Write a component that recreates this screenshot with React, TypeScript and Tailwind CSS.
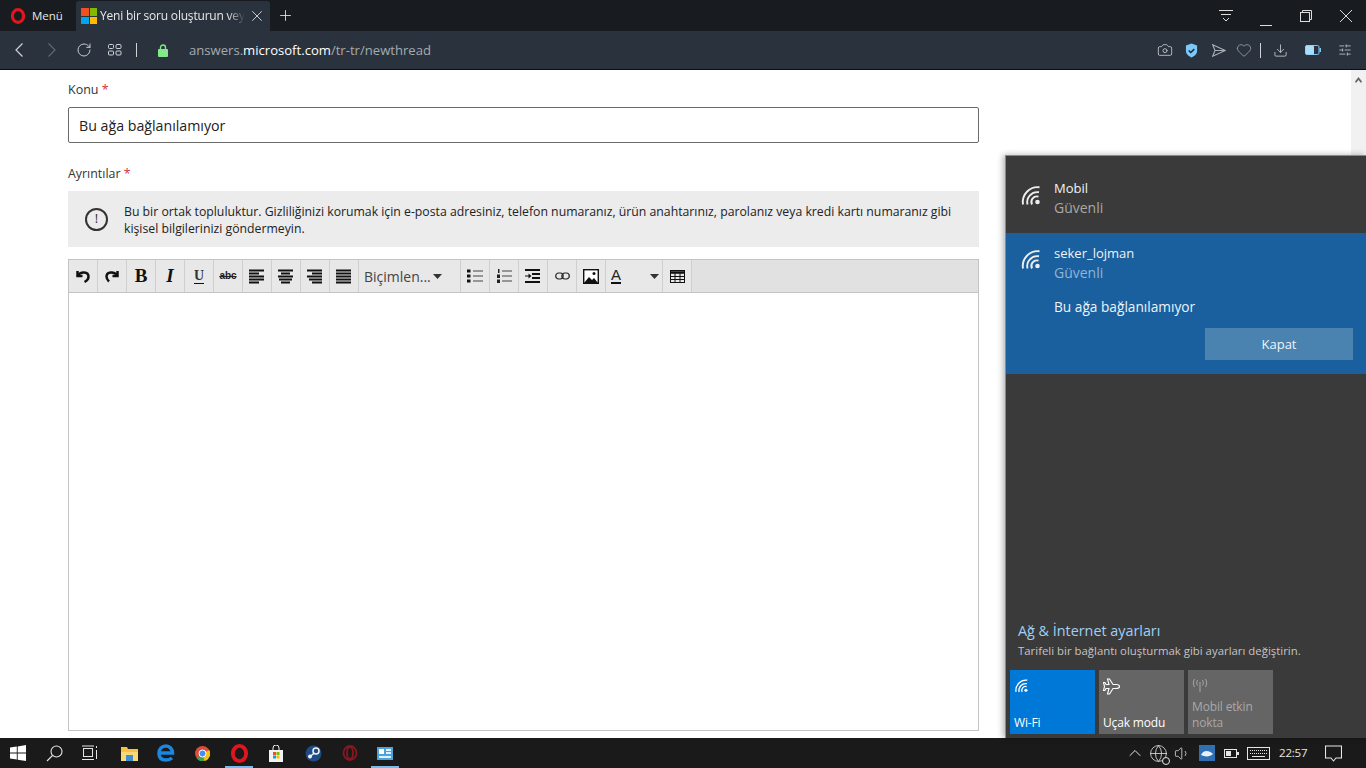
import { ChevronUp, RotateCw, Camera, Heart, Download, X, Plus, Volume1, Globe, SlidersHorizontal } from 'lucide-react';
import type { ReactNode } from 'react';

const FONT = "font-['Open_Sans',sans-serif]";

function WifiIcon({ size = 22, className = '' }: { size?: number; className?: string }) {
  return (
    <svg width={size} height={size} viewBox="0 0 22 22" fill="none" stroke="currentColor" strokeWidth="1.9" className={className}>
      <path d="M3 20.500A15 15 0 0 1 19.500 3.200" />
      <path d="M7.500 20.500A10 10 0 0 1 19 8.300" />
      <path d="M12 20.500A5.500 5.500 0 0 1 18.500 12.700" />
      <circle cx="17.500" cy="18" r="2.300" fill="currentColor" stroke="none" />
    </svg>
  );
}

function OperaLogo({ size = 16 }: { size?: number }) {
  return (
    <svg width={size} height={size} viewBox="0 0 16 16">
      <ellipse cx="8" cy="8" rx="5.600" ry="6.400" fill="none" stroke="#e0161f" strokeWidth="3.200" />
    </svg>
  );
}

function MsLogo() {
  return (
    <span className="grid h-4 w-4 grid-cols-2 gap-px">
      <span className="bg-[#f25022]" />
      <span className="bg-[#7fba00]" />
      <span className="bg-[#00a4ef]" />
      <span className="bg-[#ffb900]" />
    </span>
  );
}

function Lines({ rows }: { rows: string[] }) {
  return (
    <svg width="16" height="15" viewBox="0 0 16 15" fill="#111">
      {rows.map((d, i) => <rect key={i} x={d.split(' ')[0]} y={i * 3 + 0.5} width={d.split(' ')[1]} height="2" />)}
    </svg>
  );
}

const TOOLBAR_LEFT: ReactNode[] = [
  <svg width="16" height="16" viewBox="0 0 16 16" fill="none" stroke="#111" strokeWidth="2.500"><path d="M2.500 3v5h5" /><path d="M3 7.500C5.500 3 13.500 3.500 13.500 8.500c0 3-2 4.500-4 5.500" /></svg>,
  <svg width="16" height="16" viewBox="0 0 16 16" fill="none" stroke="#111" strokeWidth="2.500"><path d="M13.500 3v5h-5" /><path d="M13 7.500C10.500 3 2.500 3.500 2.500 8.500c0 2.500 1 3.500 2.500 5" /></svg>,
  <span className="font-['Liberation_Serif',serif] text-[19px] font-bold text-[#111]">B</span>,
  <span className="font-['Liberation_Serif',serif] text-[19px] font-bold italic text-[#111]">I</span>,
  <span className="border-b border-[#111] font-['Liberation_Serif',serif] text-[14px] leading-[14px] font-bold text-[#333]">U</span>,
  <span className="font-['Liberation_Sans',sans-serif] text-[10px] leading-3 font-bold text-[#222] line-through">abc</span>,
  <Lines rows={['0 15', '0 10', '0 15', '0 15', '0 10']} />,
  <Lines rows={['0 15', '3 9', '0 15', '1 13', '3 9']} />,
  <Lines rows={['0 15', '5 10', '0 15', '2 13', '5 10']} />,
  <Lines rows={['0 15', '0 15', '0 15', '0 15', '0 15']} />,
];

const TOOLBAR_RIGHT: ReactNode[] = [
  <svg width="16" height="14" viewBox="0 0 16 14" fill="#111"><rect x="0" y="0.500" width="3.500" height="3" /><rect x="0" y="5.500" width="3.500" height="3" /><rect x="0" y="10.500" width="3.500" height="3" /><rect x="6" y="1.500" width="10" height="1" fill="#444" /><rect x="6" y="6.500" width="10" height="1" fill="#444" /><rect x="6" y="11.500" width="10" height="1" fill="#444" /></svg>,
  <svg width="16" height="15" viewBox="0 0 16 15" fill="#222"><rect x="2" y="0" width="1.500" height="4" /><rect x="1" y="5.500" width="3" height="3.500" /><rect x="1" y="10.500" width="3" height="3.500" /><rect x="6" y="1.500" width="10" height="1" fill="#444" /><rect x="6" y="6.500" width="10" height="1" fill="#444" /><rect x="6" y="11.500" width="10" height="1" fill="#444" /></svg>,
  <svg width="16" height="15" viewBox="0 0 16 15" fill="#111"><rect x="0" y="0" width="15" height="2" /><rect x="7" y="4" width="8" height="2" /><rect x="7" y="8" width="8" height="2" /><rect x="0" y="12" width="15" height="2" /><path d="M0 6.500h3.500V4.500L6.500 7 3.500 9.500V7.500H0z" /></svg>,
  <svg width="15" height="8" viewBox="0 0 15 8" fill="none" stroke="#222" strokeWidth="1.200"><rect x="0.700" y="1" width="7.500" height="6" rx="3" /><rect x="6.800" y="1" width="7.500" height="6" rx="3" /></svg>,
  <svg width="16" height="15" viewBox="0 0 16 15"><rect x="0.700" y="0.700" width="14.600" height="13.600" fill="#fff" stroke="#111" strokeWidth="1.400" /><path d="M1 14l5-6 3 3 2-2 4 5z" fill="#111" /><circle cx="11" cy="4.500" r="1.500" fill="#111" /></svg>,
];

function ToolButton({ children }: { children: ReactNode }) {
  return <span className="flex h-full w-[29px] items-center justify-center border-r border-[#cfcfcf] bg-[#e8e8e8]">{children}</span>;
}

function Tile({ label, bg, text, icon }: { label: string; bg: string; text: string; icon: ReactNode }) {
  return (
    <div className={`flex h-[64px] w-[85px] flex-col justify-between px-1 pb-[3px] pt-2 text-[12px] leading-4 tracking-[-0.15px] ${bg} ${text}`}>
      <span>{icon}</span>
      <span className="whitespace-pre-line">{label}</span>
    </div>
  );
}

export default function App() {
  return (
    <div className={`relative flex h-[768px] w-[1366px] flex-col overflow-hidden bg-white ${FONT}`}>
      {/* Tab strip */}
      <div className="flex h-[31px] shrink-0 items-end bg-[#181b1f] text-[#e8e8e8]">
        <div className="flex h-[31px] w-[76px] items-center gap-1.5 pl-[10px] text-[11.500px]">
          <OperaLogo />
          <span>Menü</span>
        </div>
        <div className="flex h-[30px] w-[194px] items-center rounded-t-[3px] bg-[#2a333d] pl-[5px] text-[12px]">
          <MsLogo />
          <span className="ml-[3px] w-[145px] overflow-hidden whitespace-nowrap tracking-[-0.2px] [mask-image:linear-gradient(to_right,black_88%,transparent)]">Yeni bir soru oluşturun veya</span>
          <X size={18} strokeWidth={1.1} className="ml-[3px]" />
        </div>
        <Plus size={17} strokeWidth={1.2} className="mb-[7px] ml-[7px]" />
        <div className="ml-auto flex h-[31px] items-center pr-[14px]">
          <svg width="14" height="12" viewBox="0 0 14 12" fill="none" stroke="#ddd" className="mr-[27px]"><path d="M0 .5h14M2 4.500h10M4 8l3 3 3-3" /></svg>
          <svg width="12" height="12" viewBox="0 0 12 12" fill="none" stroke="#ddd" className="mr-[28px] mt-[8px]"><path d="M0 11.500h12" /></svg>
          <svg width="12" height="12" viewBox="0 0 12 12" fill="none" stroke="#ddd" className="mr-[28px]"><rect x="0.500" y="2.500" width="9" height="9" /><path d="M2.500 2.500V.5h9v9h-2" /></svg>
          <svg width="12" height="12" viewBox="0 0 12 12" fill="none" stroke="#ddd"><path d="M0 0l12 12M12 0L0 12" /></svg>
        </div>
      </div>

      {/* Address bar */}
      <div className="flex h-[39px] shrink-0 items-center border-b border-[#0c0e10] bg-[#2a333d] text-[#cfd3d6]">
        <svg width="8" height="14" viewBox="0 0 8 14" fill="none" stroke="#cfd3d6" strokeWidth="1.200" className="ml-[15px]"><path d="M7.500.5 1 7l6.500 6.500" /></svg>
        <svg width="8" height="14" viewBox="0 0 8 14" fill="none" stroke="#5f6871" strokeWidth="1.200" className="ml-[25px]"><path d="M.5.5 7 7 .5 13.500" /></svg>
        <RotateCw size={16} strokeWidth={1.4} className="ml-[20px]" />
        <svg width="14" height="12" viewBox="0 0 14 12" fill="none" stroke="#cfd3d6" className="ml-[16px]"><rect x="0.500" y="0.500" width="5" height="4" rx="1" /><rect x="8" y="0.500" width="5" height="4" rx="1" /><rect x="0.500" y="7" width="5" height="4" rx="1" /><rect x="8" y="7" width="5" height="4" rx="1" /></svg>
        <span className="ml-[14px] h-[14px] w-px bg-[#cfd3d6]" />
        <svg width="10" height="13" viewBox="0 0 10 13" className="ml-[21px]"><path d="M2.500 6V3.500a2.500 2.500 0 0 1 5 0V6" fill="none" stroke="#82e88a" strokeWidth="1.400" /><rect x="0" y="5" width="10" height="8" rx="1" fill="#82e88a" /></svg>
        <span className="ml-[21px] pt-[1px] text-[13.100px] text-[#a3abb2]">
          answers.<span className="text-white">microsoft.com</span>/tr-tr/newthread
        </span>
        <div className="ml-auto flex items-center pr-[14px]">
          <Camera size={16} strokeWidth={1.2} />
          <svg width="13" height="15" viewBox="0 0 14 16" className="ml-[12px]"><path d="M7 .5 13 2.500v6c0 3.500-3 5.500-6 7-3-1.500-6-3.500-6-7v-6z" fill="#7cc8f8" /><path d="M4 8l2.200 2.200L10 6.500" fill="none" stroke="#1b2a38" strokeWidth="1.600" /></svg>
          <svg width="14" height="13" viewBox="0 0 14 13" fill="none" stroke="#a9afb4" strokeWidth="1.100" className="ml-[14px]"><path d="M.7.8 13.300 6.500.7 12.200 3 6.500zM3 6.500h10.300" /></svg>
          <Heart size={16} strokeWidth={1.1} className="ml-[10px] text-[#a9afb4]" />
          <span className="ml-[8px] h-[15px] w-px bg-[#cfd3d6]" />
          <Download size={15} strokeWidth={1.3} className="ml-[12px]" />
          <svg width="16" height="10" viewBox="0 0 16 10" className="ml-[17px]"><rect x="0.500" y="0.500" width="13.500" height="9" rx="1.500" fill="none" stroke="#7cc8f8" /><rect x="0.500" y="0.500" width="8.500" height="9" rx="1" fill="#a8dcfb" /><rect x="14.500" y="3" width="1.500" height="4" fill="#7cc8f8" /></svg>
          <SlidersHorizontal size={14} strokeWidth={1.3} className="ml-[17px]" />
        </div>
      </div>

      {/* Page */}
      <div className="flex min-h-0 flex-1">
        <main className="flex-1 pl-[68px] pt-[11px]">
          <div className="w-[911px]">
            <label className="block text-[12.500px] leading-[18px] text-[#333]">Konu <span className="text-[#d13438]">*</span></label>
            <div className="mt-[8px] flex h-[36px] items-center rounded-[2px] border border-[#6b6b6b] pl-[10px] pt-[2px] text-[14.200px] text-[#222]">Bu ağa bağlanılamıyor</div>
            <label className="mt-[22px] block text-[12.400px] leading-[18px] text-[#333]">Ayrıntılar <span className="text-[#d13438]">*</span></label>
            <div className="mt-[8px] flex h-[56px] items-center bg-[#ececec] pl-[17px] pr-[20px]">
              <span className="flex h-[23px] w-[23px] shrink-0 items-center justify-center rounded-full border-2 border-[#333] text-[13px] text-[#333]">!</span>
              <p className="ml-[16px] pt-[2px] text-[12.250px] leading-[17px] text-[#222]">Bu bir ortak topluluktur. Gizliliğinizi korumak için e-posta adresiniz, telefon numaranız, ürün anahtarınız, parolanız veya kredi kartı numaranız gibi kişisel bilgilerinizi göndermeyin.</p>
            </div>
            <div className="mt-[12px] flex h-[472px] flex-col border border-[#c4c4c4]">
              <div className="flex h-[33px] shrink-0 border-b border-[#c4c4c4] bg-[#e1e1e1]">
                {TOOLBAR_LEFT.map((icon, i) => <ToolButton key={i}>{icon}</ToolButton>)}
                <span className="flex h-full w-[102px] items-center justify-between border-r border-[#cfcfcf] bg-[#e8e8e8] pl-[5px] pr-[18px] text-[14px] text-[#444]">
                  Biçimlen...
                  <svg width="9" height="5" viewBox="0 0 9 5" fill="#333"><path d="M0 0h9L4.500 5z" /></svg>
                </span>
                {TOOLBAR_RIGHT.map((icon, i) => <ToolButton key={i}>{icon}</ToolButton>)}
                <span className="flex h-full w-[57px] items-center justify-between border-r border-[#cfcfcf] bg-[#e8e8e8] pl-[5px] pr-[3px]">
                  <span className="border-b-2 border-[#111] font-['Liberation_Sans',sans-serif] text-[15px] leading-[14px] text-[#222]">A</span>
                  <svg width="9" height="5" viewBox="0 0 9 5" fill="#333"><path d="M0 0h9L4.500 5z" /></svg>
                </span>
                <ToolButton>
                  <svg width="15" height="13" viewBox="0 0 15 13" fill="none" stroke="#111"><rect x="0.500" y="0.500" width="14" height="12" /><path d="M0 2.500h15" strokeWidth="2.500" /><path d="M0 6.500h15M0 9.500h15M5 3v10M10 3v10" /></svg>
                </ToolButton>
              </div>
            </div>
          </div>
        </main>
        <div className="flex w-[15px] shrink-0 justify-center bg-[#f1f1f1] pt-[7px]">
          <svg width="7" height="6" viewBox="0 0 7 6" fill="#666"><path d="M3.500 0 7 4.500 6 6 3.500 3 1 6 0 4.500z" /></svg>
        </div>
      </div>

      {/* Network flyout */}
      <aside className="absolute bottom-[30px] left-[1005px] right-0 top-[155px] flex flex-col border-l border-t border-[#8a8a8a] bg-[#3a3a3a] text-white shadow-[-2px_0_6px_rgba(0,0,0,0.3)]">
        <div className="flex h-[77px] shrink-0 pl-[14px] pt-[23px]">
          <WifiIcon className="mt-[5px] text-[#eee]" />
          <div className="ml-[12px] text-[13px] leading-[19px]">
            <div className="text-[#f2f2f2]">Mobil</div>
            <div className="text-[14px] text-[#a8a8a8]">Güvenli</div>
          </div>
        </div>
        <div className="relative h-[141px] shrink-0 bg-[#1a5f9e] pl-[14px] pt-[15px]">
          <div className="flex">
            <WifiIcon className="text-[#eee]" />
            <div className="ml-[12px] -mt-[4.500px] text-[13px] leading-[19px]">
              <div className="text-[#f2f2f2]">seker_lojman</div>
              <div className="text-[14px] text-[#8fb5d8]">Güvenli</div>
            </div>
          </div>
          <div className="ml-[34px] mt-[15px] text-[13.700px] leading-[20px] text-[#eef4fa]">Bu ağa bağlanılamıyor</div>
          <div className="mr-[13px] mt-[11px] ml-auto flex h-[32px] w-[148px] items-center justify-center bg-[#4a82b0] pt-[2px] text-[13px] font-medium text-[#eef4fa]">Kapat</div>
        </div>
        <div className="mt-auto pl-[12px] text-[14.350px] leading-[20px] text-[#9fd0f5]">Ağ &amp; İnternet ayarları</div>
        <div className="pl-[12px] pt-[2px] text-[11.400px] leading-[16px] text-[#c4c4c4]">Tarifeli bir bağlantı oluşturmak gibi ayarları değiştirin.</div>
        <div className="mb-[4px] mt-[11px] flex gap-1 pl-[4px]">
          <Tile label="Wi-Fi" bg="bg-[#0078d7]" text="text-white" icon={<WifiIcon size={15} />} />
          <Tile label="Uçak modu" bg="bg-[#656565]" text="text-white" icon={
            <svg width="17" height="17" viewBox="0 0 17 17" fill="none" stroke="#fff" strokeWidth="1.100"><path d="M16.500 8.500C16.500 7.300 14.500 6.500 13 6.500H10L6.500 1H4.500L6 6.500H3L2 4.500H.5L1.500 8.500 .5 12.500H2L3 10.500H6L4.500 16H6.500L10 10.500H13C14.500 10.500 16.500 9.700 16.500 8.500Z" /></svg>
          } />
          <Tile label={'Mobil etkin\nnokta'} bg="bg-[#656565]" text="text-[#a8a8a8]" icon={
            <svg width="16" height="14" viewBox="0 0 16 14" fill="none" stroke="#a8a8a8"><path d="M8 4v10M5.500 2c-1 2-1 4 0 5.500M10.500 2c1 2 1 4 0 5.500M2.500 1c-1.500 2.500-1.500 6 0 8M13.500 1c1.500 2.500 1.500 6 0 8" /></svg>
          } />
        </div>
      </aside>

      {/* Taskbar */}
      <footer className="flex h-[30px] shrink-0 items-center bg-[#1a1a1a] text-[#e6e6e6]">
        <svg width="16" height="16" viewBox="0 0 16 16" fill="#fff" className="ml-[10px]"><path d="M0 2.500 6.800 1.500v6.100H0zM7.700 1.400 16 0v7.600H7.700zM0 8.400h6.800v6.100L0 13.500zM7.700 8.400H16V16l-8.300-1.300z" /></svg>
        <svg width="17" height="17" viewBox="0 0 17 17" fill="none" stroke="#e6e6e6" strokeWidth="1.100" className="ml-[20px]"><circle cx="10.500" cy="6.500" r="5.500" /><path d="M6.500 10.500 1 16" /></svg>
        <svg width="16" height="16" viewBox="0 0 16 16" fill="none" stroke="#e6e6e6" className="ml-[19px]"><rect x="1.500" y="3.500" width="9" height="8" /><path d="M0 1h12M0 14.500h12M14.500 1v2M14.500 5v9" /></svg>
        <svg width="17" height="15" viewBox="0 0 17 15" className="ml-[23px]"><path d="M0 1h6l1 2h10v12H0z" fill="#f5c242" /><rect x="0" y="6" width="17" height="9" fill="#f9d976" /><rect x="5" y="9" width="7" height="6" fill="#3e8ed0" /></svg>
        <svg width="18" height="18" viewBox="0 0 18 18" className="ml-[19px]" fill="none" stroke="#1b87e0" strokeWidth="3.500"><path d="M3 9h12.500C15.500 5 12.500 2 9 2 5 2 2 5 2 9.500S5 16 9 16c2.500 0 4.500-.7 6-2" /></svg>
        <svg width="15" height="15" viewBox="0 0 15 15" className="ml-[20px]"><circle cx="7.500" cy="7.500" r="7.500" fill="#dd4b3e" /><path d="M7.500 7.500 1.500 12a7.500 7.500 0 0 0 8 3z" fill="#3fa34d" /><path d="M7.500 7.500l6.700-3.500A7.500 7.500 0 0 1 9.500 15z" fill="#f4c20d" /><circle cx="7.500" cy="7.500" r="3.500" fill="#4a8df0" stroke="#fff" /></svg>
        <span className="relative ml-[15px] flex h-[30px] w-[28px] items-center justify-center">
          <OperaLogo size={19} />
          <span className="absolute bottom-0 h-[2px] w-[28px] bg-[#76b9ed]" />
        </span>
        <svg width="16" height="17" viewBox="0 0 16 17" className="ml-[15px]"><path d="M1 5h14v12H1z" fill="#f2f2f2" /><path d="M5 5V3a3 3 0 0 1 6 0v2" fill="none" stroke="#f2f2f2" /><rect x="5" y="7" width="3" height="3" fill="#f25022" /><rect x="8.500" y="7" width="3" height="3" fill="#7fba00" /><rect x="5" y="10.500" width="3" height="3" fill="#00a4ef" /><rect x="8.500" y="10.500" width="3" height="3" fill="#ffb900" /></svg>
        <svg width="17" height="17" viewBox="0 0 17 17" className="ml-[21px]"><circle cx="8.500" cy="8.500" r="8" fill="#1f4a84" /><circle cx="11" cy="6" r="3" fill="none" stroke="#f2f2f2" strokeWidth="1.500" /><circle cx="5" cy="11.500" r="2" fill="#f2f2f2" /><path d="M5.500 11l4-3" stroke="#f2f2f2" strokeWidth="1.500" /></svg>
        <svg width="16" height="16" viewBox="0 0 16 16" className="ml-[20px]"><ellipse cx="8" cy="8" rx="6.500" ry="7" fill="none" stroke="#8a1620" strokeWidth="1.800" /><ellipse cx="8" cy="8" rx="3" ry="6" fill="none" stroke="#8a1620" strokeWidth="1.800" /></svg>
        <span className="relative ml-[13px] flex h-[30px] w-[28px] items-center justify-center">
          <svg width="16" height="13" viewBox="0 0 16 13"><rect width="16" height="13" fill="#4aa3df" /><rect x="2" y="2" width="5" height="5" fill="#fff" /><rect x="9" y="2" width="5" height="2" fill="#dff1fb" /><rect x="9" y="5" width="5" height="2" fill="#dff1fb" /><rect x="2" y="9" width="12" height="2" fill="#dff1fb" /></svg>
          <span className="absolute bottom-0 h-[2px] w-[28px] bg-[#76b9ed]" />
        </span>
        <div className="ml-auto flex items-center">
          <ChevronUp size={20} strokeWidth={1.2} />
          <span className="relative ml-[4px] flex">
            <Globe size={19} strokeWidth={1} />
            <span className="absolute -bottom-0.5 -right-0.5 h-[8px] w-[8px] rounded-full border border-[#e6e6e6] bg-[#1a1a1a]" />
          </span>
          <Volume1 size={17} strokeWidth={1.1} className="ml-[6px]" />
          <svg width="16" height="16" viewBox="0 0 16 16" className="ml-[8px]"><rect width="16" height="16" fill="#2f6fb3" /><path d="M2 10c2-5 8-5 12-1-3 3-8 3-12 1z" fill="#e8f1fa" /></svg>
          <svg width="15" height="9" viewBox="0 0 15 9" className="ml-[9px]"><rect x="0.500" y="0.500" width="12" height="8" fill="none" stroke="#e6e6e6" /><rect x="2" y="2" width="5" height="5" fill="#e6e6e6" /><rect x="13" y="3" width="2" height="3" fill="#e6e6e6" /></svg>
          <svg width="23" height="13" viewBox="0 0 23 13" fill="none" stroke="#e6e6e6" className="ml-[8px]"><rect x="0.500" y="0.500" width="22" height="12" /><path d="M3 3.500h17M3 6.500h17" strokeDasharray="1 1" /><path d="M5 9.500h13" /></svg>
          <span className="ml-[9px] w-[28px] whitespace-nowrap text-[11.500px] tracking-[-0.2px] text-[#e6e6e6]">22:57</span>
          <svg width="17" height="17" viewBox="0 0 17 17" fill="none" stroke="#e6e6e6" strokeWidth="1.100" className="ml-[18px] mr-[24px]"><path d="M.5 1h16v12h-5.500l-2.500 3-2.500-3H.5z" /></svg>
        </div>
      </footer>
    </div>
  );
}
